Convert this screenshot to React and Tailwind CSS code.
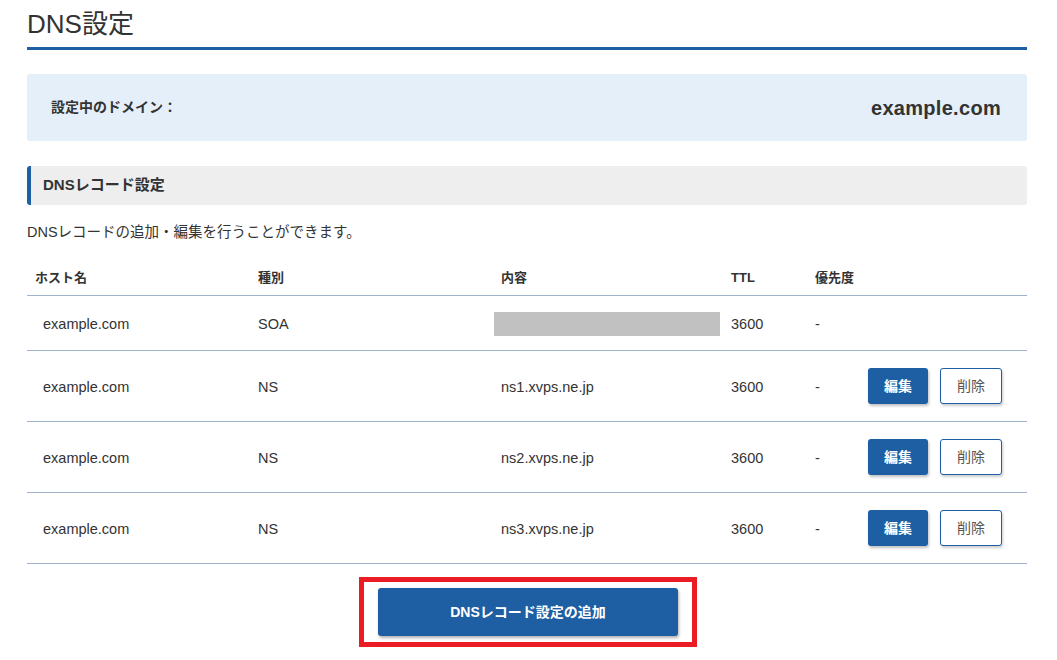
import React from "react";

const font = { fontFamily: '"Liberation Sans", "Noto Sans CJK JP", sans-serif' };

const rows = [
  { host: "example.com", type: "SOA", content: null, ttl: "3600", pri: "-", actions: false },
  { host: "example.com", type: "NS", content: "ns1.xvps.ne.jp", ttl: "3600", pri: "-", actions: true },
  { host: "example.com", type: "NS", content: "ns2.xvps.ne.jp", ttl: "3600", pri: "-", actions: true },
  { host: "example.com", type: "NS", content: "ns3.xvps.ne.jp", ttl: "3600", pri: "-", actions: true },
];

const cols = "grid grid-cols-[223px_243px_230px_84px_53px_1fr]";

export default function App() {
  return (
    <div className="min-h-[660px] bg-white text-[#333]" style={font}>
      <div className="mx-[27px] w-[1000px]">
        <h1 className="pt-[7px] h-[40px] text-[26px] leading-[34px] text-[#333] border-b-[3px] border-[#1e5fa3] box-content font-normal">
          DNS設定
        </h1>
        <div className="mt-[24px] h-[67px] rounded-[3px] bg-[#e5eff9] flex items-center justify-between pl-[24px] pr-[26px]">
          <span className="text-[14px] font-bold text-[#333]">設定中のドメイン：</span>
          <span className="text-[20px] font-bold text-[#333] tracking-[0.3px]">example.com</span>
        </div>
        <div className="mt-[25px] h-[39px] rounded-[3px] bg-[#eeeeee] border-l-[4px] border-[#1e5fa3] flex items-center pl-[12px]">
          <span className="text-[15px] font-bold text-[#333]">DNSレコード設定</span>
        </div>
        <p className="mt-[17px] text-[14.5px] leading-[20px] text-[#333]">
          DNSレコードの追加・編集を行うことができます。
        </p>
        <div className={`${cols} mt-[18px] h-[36px] items-center border-b border-[#9db4cc] text-[13px] font-bold text-[#333]`}>
          <div className="pl-[8px]">ホスト名</div>
          <div className="pl-[8px]">種別</div>
          <div className="pl-[8px]">内容</div>
          <div className="pl-[8px]">TTL</div>
          <div className="pl-[8px]">優先度</div>
          <div></div>
        </div>
        {rows.map((r, i) => (
          <div
            key={i}
            className={`${cols} ${r.actions ? "h-[71px]" : "h-[55px]"} items-center border-b border-[#9db4cc] text-[14.5px] text-[#333]`}
          >
            <div className="pl-[16px] pt-[3px]">{r.host}</div>
            <div className="pl-[8px] pt-[3px]">{r.type}</div>
            <div className="pl-[8px]">
              {r.content ? (
                <div className="pt-[3px]">{r.content}</div>
              ) : (
                <div className="-ml-[7px] mt-[2px] w-[226px] h-[24px] bg-[#c1c1c1]"></div>
              )}
            </div>
            <div className="pl-[8px] pt-[3px]">{r.ttl}</div>
            <div className="pl-[8px] pt-[3px]">{r.pri}</div>
            <div className="pl-[8px] flex gap-[12px]">
              {r.actions && (
                <>
                  <button className="w-[60px] h-[36px] rounded-[3px] bg-[#1e5fa3] text-white text-[14px] font-bold shadow-[1px_2px_3px_rgba(0,0,0,0.25)]">
                    編集
                  </button>
                  <button className="w-[62px] h-[36px] rounded-[3px] bg-white border border-[#1e5fa3] text-[#555] text-[14px] shadow-[1px_2px_3px_rgba(0,0,0,0.2)]">
                    削除
                  </button>
                </>
              )}
            </div>
          </div>
        ))}
        <div className="flex justify-center mt-[13px] pl-[2px]">
          <div className="border-[5px] border-[#ea1c24] px-[14px] pt-[6px] pb-[6px]">
            <button className="w-[300px] h-[48px] rounded-[3px] bg-[#1e5fa3] text-white text-[14px] font-bold shadow-[1px_2px_3px_rgba(0,0,0,0.3)]">
              DNSレコード設定の追加
            </button>
          </div>
        </div>
      </div>
    </div>
  );
}
